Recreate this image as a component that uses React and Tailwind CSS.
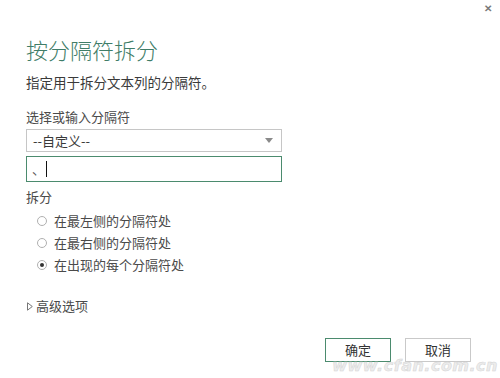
import React from "react";

export default function App() {
  const font = { fontFamily: '"Noto Sans CJK SC", "Noto Sans", sans-serif' };
  const Radio = ({ checked, label }) => (
    <div className="flex items-center h-[22px]">
      <div className="w-[22px] flex justify-end pr-[1px]">
        <div className="w-[10px] h-[10px] rounded-full border border-[#b0b0b0] bg-white flex items-center justify-center">
          {checked && <div className="w-[4px] h-[4px] rounded-full bg-[#333]" />}
        </div>
      </div>
      <span className="ml-[6px] text-[13px] leading-[16px] text-[#4a4a4a]">{label}</span>
    </div>
  );
  return (
    <div className="w-[500px] h-[378px] bg-white relative overflow-hidden" style={font}>
      <div className="absolute top-[3px] right-[8px] text-[#7a7a7a] text-[10px] leading-[10px] font-bold">✕</div>
      <div className="flex flex-col pl-[26px] pt-[38px]">
        <h1 className="text-[22px] leading-[22px] text-[#3f7d68] font-light">按分隔符拆分</h1>
        <p className="mt-[14px] text-[13.5px] leading-[16px] text-[#3a3a3a]">指定用于拆分文本列的分隔符。</p>
        <div className="mt-[19px] text-[13px] leading-[16px] text-[#4a4a4a]">选择或输入分隔符</div>
        <div className="mt-[4px] w-[256px] h-[23px] border border-[#c6c6c6] flex items-center justify-between pl-[6px] pr-[8px]">
          <span className="text-[13px] leading-[16px] text-[#3a3a3a]">--自定义--</span>
          <svg width="8" height="5" viewBox="0 0 8 5">
            <path d="M0 0 L8 0 L4 5 Z" fill="#8a8a8a" />
          </svg>
        </div>
        <div className="mt-[4px] w-[256px] h-[26px] border border-[#4b8b6e] flex items-center pl-[5px]">
          <span className="text-[13px] leading-[16px] text-[#555]">、</span>
          <div className="ml-[1px] w-[1px] h-[16px] bg-[#111]" />
        </div>
        <div className="mt-[7px] text-[13px] leading-[16px] text-[#4a4a4a]">拆分</div>
        <div className="mt-[5px] flex flex-col">
          <Radio label="在最左侧的分隔符处" />
          <Radio label="在最右侧的分隔符处" />
          <Radio checked label="在出现的每个分隔符处" />
        </div>
        <div className="mt-[22px] flex items-center h-[16px]">
          <svg width="6" height="9" viewBox="0 0 6 9" className="ml-[1px]">
            <path d="M0.5 0.8 L5.3 4.5 L0.5 8.2 Z" fill="none" stroke="#777" strokeWidth="1" />
          </svg>
          <span className="ml-[3px] text-[13px] leading-[16px] text-[#4a4a4a]">高级选项</span>
        </div>
        <div className="mt-[24px] flex justify-end pr-[29px] gap-[14px]">
          <div className="w-[66px] h-[24px] border border-[#4b8b6e] flex items-center justify-center text-[13px] text-[#333]">确定</div>
          <div className="w-[66px] h-[24px] border border-[#c9c9c9] flex items-center justify-center text-[13px] text-[#333]">取消</div>
        </div>
      </div>
      <div
        className="absolute right-[2px] bottom-[4px] text-[16px] leading-[16px] italic font-bold text-[#ececec] tracking-[0.5px]"
        style={{ fontFamily: '"DejaVu Sans", sans-serif', WebkitTextStroke: "0.5px #d4d4d4" }}
      >
        www.cfan.com.cn
      </div>
    </div>
  );
}
